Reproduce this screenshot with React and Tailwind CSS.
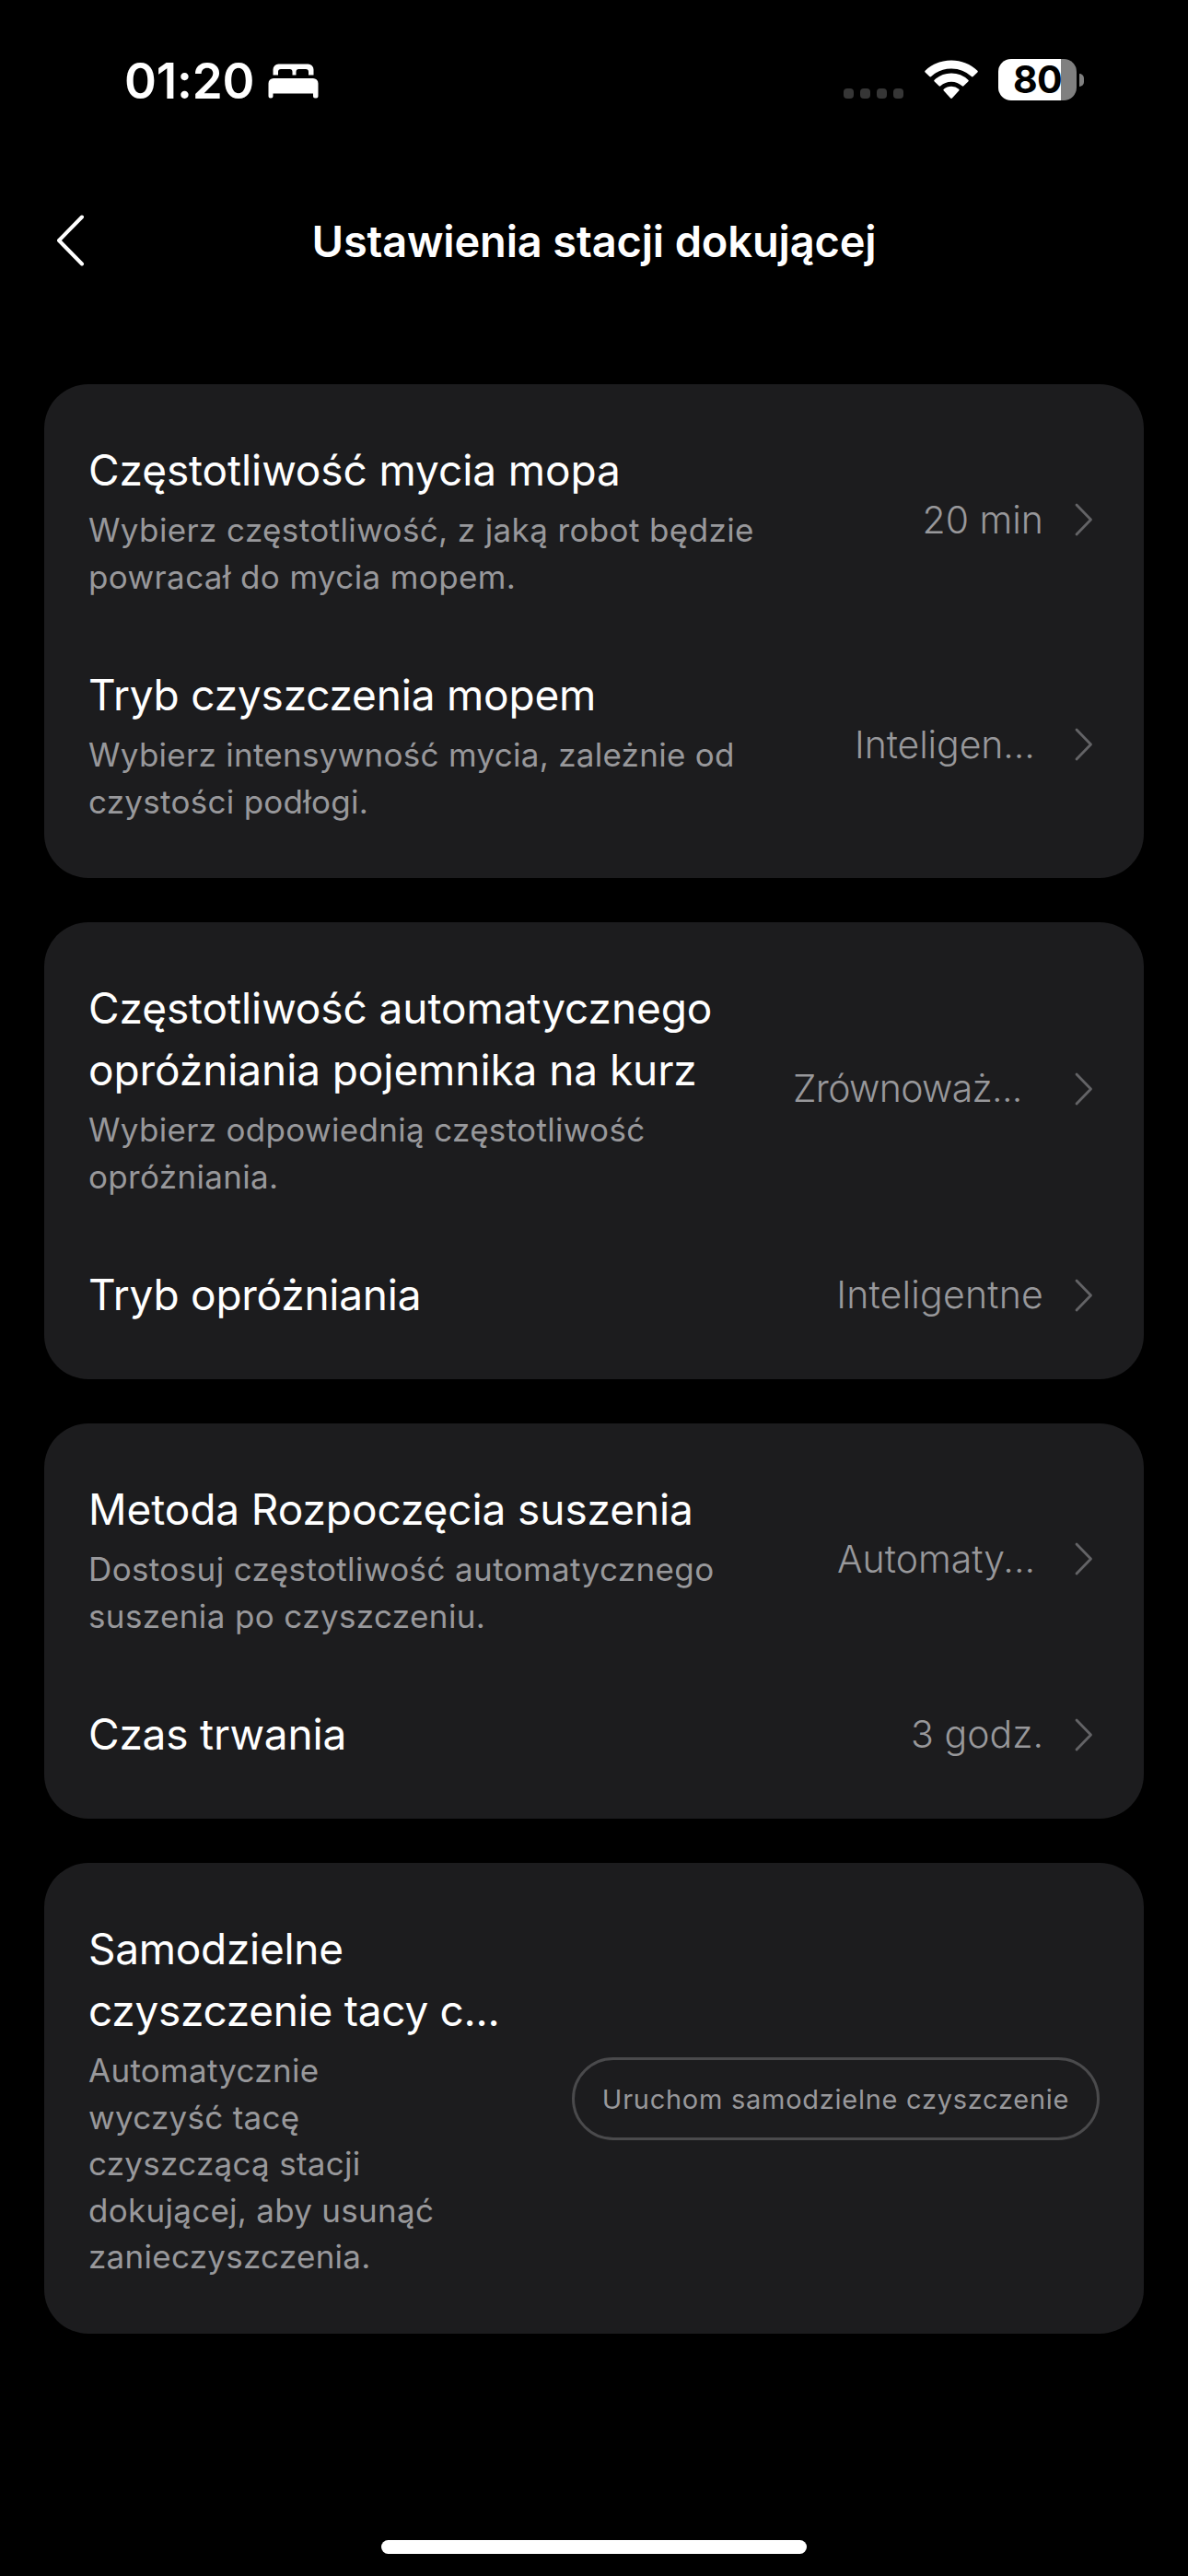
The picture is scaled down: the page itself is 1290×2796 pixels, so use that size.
import React from "react";

// Settings grouped the way they are shown, one array per card
const groups = [
  [
    {
      title: "Częstotliwość mycia mopa",
      note: "Wybierz częstotliwość, z jaką robot będzie\npowracał do mycia mopem.",
      value: "20 min",
    },
    {
      title: "Tryb czyszczenia mopem",
      titleClass: "tracking-[-0.2px]",
      note: "Wybierz intensywność mycia, zależnie od\nczystości podłogi.",
      noteClass: "tracking-[0.28px]",
      value: "Inteligen...",
      valueClass: "w-[205px] tracking-[-0.1px]",
    },
  ],
  [
    {
      title: "Częstotliwość automatycznego\nopróżniania pojemnika na kurz",
      note: "Wybierz odpowiednią częstotliwość\nopróżniania.",
      noteClass: "tracking-[0.32px]",
      value: "Zrównoważ...",
      valueClass: "w-[272px] tracking-[-0.7px]",
    },
    {
      title: "Tryb opróżniania",
      titleClass: "tracking-[-0.25px]",
      value: "Inteligentne",
      valueClass: "tracking-[0.2px]",
    },
  ],
  [
    {
      title: "Metoda Rozpoczęcia suszenia",
      note: "Dostosuj częstotliwość automatycznego\nsuszenia po czyszczeniu.",
      value: "Automaty...",
      valueClass: "w-[224px]",
    },
    {
      title: "Czas trwania",
      titleClass: "tracking-[-0.2px]",
      value: "3 godz.",
    },
  ],
  [
    {
      title: "Samodzielne\nczyszczenie tacy c...",
      titleClass: "tracking-[-0.28px]",
      note: "Automatycznie\nwyczyść tacę\nczyszczącą stacji\ndokującej, aby usunąć\nzanieczyszczenia.",
      noteClass: "tracking-[0.28px]",
      action: "Uruchom samodzielne czyszczenie",
    },
  ],
];

const BedIcon = () => (
  <svg width="56" height="38" viewBox="0 0 56 38" fill="#fff">
    <path d="M5.5 12.5v-6a6 6 0 0 1 6-6h32a6 6 0 0 1 6 6v6H44V9a3 3 0 0 0-3-3h-7.5a3 3 0 0 0-3 3v3.5h-4V9a3 3 0 0 0-3-3H14a3 3 0 0 0-3 3v3.5z" />
    <path d="M.5 21.5A5.5 5.5 0 0 1 6 16h43a5.5 5.5 0 0 1 5.5 5.5v14a2 2 0 0 1-2 2H51a2 2 0 0 1-2-2v-3H5.5v3a2 2 0 0 1-2 2h-1a2 2 0 0 1-2-2z" />
  </svg>
);

const WifiIcon = () => (
  <svg width="58" height="43" viewBox="0 0 58 43" fill="#fff">
    <path d="M29 .5C18 .5 8 4.7.6 11.7a1.2 1.2 0 0 0 0 1.7l4.7 4.7a1.3 1.3 0 0 0 1.8 0A31.5 31.5 0 0 1 29 9.5a31.5 31.5 0 0 1 21.9 8.6 1.3 1.3 0 0 0 1.8 0l4.7-4.7a1.2 1.2 0 0 0 0-1.7C50 4.7 40 .5 29 .5z" />
    <path d="M29 14.5a26.5 26.5 0 0 0-18.3 7.2 1.2 1.2 0 0 0 0 1.8l4.9 4.8a1.3 1.3 0 0 0 1.7 0A17.3 17.3 0 0 1 29 23.7c4.5 0 8.6 1.7 11.7 4.6a1.3 1.3 0 0 0 1.7 0l4.9-4.8a1.2 1.2 0 0 0 0-1.8A26.5 26.5 0 0 0 29 14.5z" />
    <path d="M29 28.8c-3.1 0-6 1.1-8.2 3a1.2 1.2 0 0 0 0 1.8l7.3 7.9a1.3 1.3 0 0 0 1.8 0l7.3-7.9a1.2 1.2 0 0 0 0-1.8 12.5 12.5 0 0 0-8.2-3z" />
  </svg>
);

const Battery = () => (
  <div className="flex items-center gap-[3px]">
    <div className="flex h-[45px] w-[85px] items-center justify-center rounded-[14px] bg-linear-to-r from-white from-80% to-[#808080] to-80%">
      <span className="text-[41px] leading-[45px] font-bold tracking-[-0.6px] text-black">
        80
      </span>
    </div>
    <div className="h-[14px] w-[5px] rounded-r-full bg-[#808080]" />
  </div>
);

const StatusBar = () => (
  <div className="flex h-[176px] items-center justify-between pr-[113px] pl-[135px]">
    <div className="flex items-center gap-[15px]">
      <span className="text-[53px] leading-none font-semibold tracking-[-0.2px]">
        01:20
      </span>
      <BedIcon />
    </div>
    <div className="flex items-center gap-[22px] pb-[3px]">
      {/* No signal: four dim dots */}
      <div className="mt-[30px] mr-[1px] flex gap-[7px]">
        <div className="size-[11px] rounded-[4px] bg-[#363636]" />
        <div className="size-[11px] rounded-[4px] bg-[#363636]" />
        <div className="size-[11px] rounded-[4px] bg-[#363636]" />
        <div className="size-[11px] rounded-[4px] bg-[#363636]" />
      </div>
      <WifiIcon />
      <Battery />
    </div>
  </div>
);

const Header = () => (
  <header className="grid h-[170px] grid-cols-[1fr_auto_1fr] items-center px-[61px]">
    <button type="button" className="w-fit">
      <svg width="32" height="56" viewBox="0 0 32 56" fill="none">
        <path
          d="M28 2.5 3 28l25 25.5"
          stroke="#fff"
          strokeWidth="4"
          strokeLinecap="round"
          strokeLinejoin="round"
        />
      </svg>
    </button>
    <h1 className="text-[47px] leading-none font-semibold tracking-[-0.16px]">
      Ustawienia stacji dokującej
    </h1>
  </header>
);

const Chevron = () => (
  <svg width="20" height="36" viewBox="0 0 20 36" fill="none">
    <path
      d="M2 2 17.5 18 2 34"
      stroke="#636366"
      strokeWidth="2.8"
      strokeLinecap="round"
      strokeLinejoin="round"
    />
  </svg>
);

const SettingRow = ({ item }) => (
  <div className="flex items-center justify-between pt-[36px] pb-[34px]">
    <div className="whitespace-pre">
      <h2
        className={`text-[46px] leading-[67px] ${item.titleClass || "tracking-[-0.09px]"}`}
      >
        {item.title}
      </h2>
      {item.note && (
        <p
          className={`mt-[6px] text-[35px] leading-[50.5px] text-[#98989b] ${item.noteClass || "tracking-[0.38px]"}`}
        >
          {item.note}
        </p>
      )}
    </div>

    {item.action ? (
      <button
        type="button"
        className="h-[90px] w-[573px] rounded-full border-[3px] border-[#4a4a4c] pt-px text-[29px] tracking-[0.73px] whitespace-nowrap text-[#98989b]"
      >
        {item.action}
      </button>
    ) : (
      <div className="flex items-center gap-[34px] pr-[7px]">
        <span
          className={`text-[41px] leading-none font-light whitespace-nowrap text-[#98989b] ${item.valueClass || "tracking-normal"}`}
        >
          {item.value}
        </span>
        <Chevron />
      </div>
    )}
  </div>
);

const App = () => {
  return (
    <div className="flex h-[2796px] w-[1290px] flex-col bg-black font-['Inter',sans-serif] text-white">
      <StatusBar />
      <Header />
      <main className="flex flex-1 flex-col gap-[48px] px-[48px] pt-[71px]">
        {groups.map((items) => (
          <section
            key={items[0].title}
            className="rounded-[48px] bg-[#1c1c1e] px-[48px] py-[24px]"
          >
            {items.map((item) => (
              <SettingRow key={item.title} item={item} />
            ))}
          </section>
        ))}
      </main>
      {/* Home indicator */}
      <div className="mx-auto mb-[24px] h-[15px] w-[462px] rounded-full bg-white" />
    </div>
  );
};

export default App;
